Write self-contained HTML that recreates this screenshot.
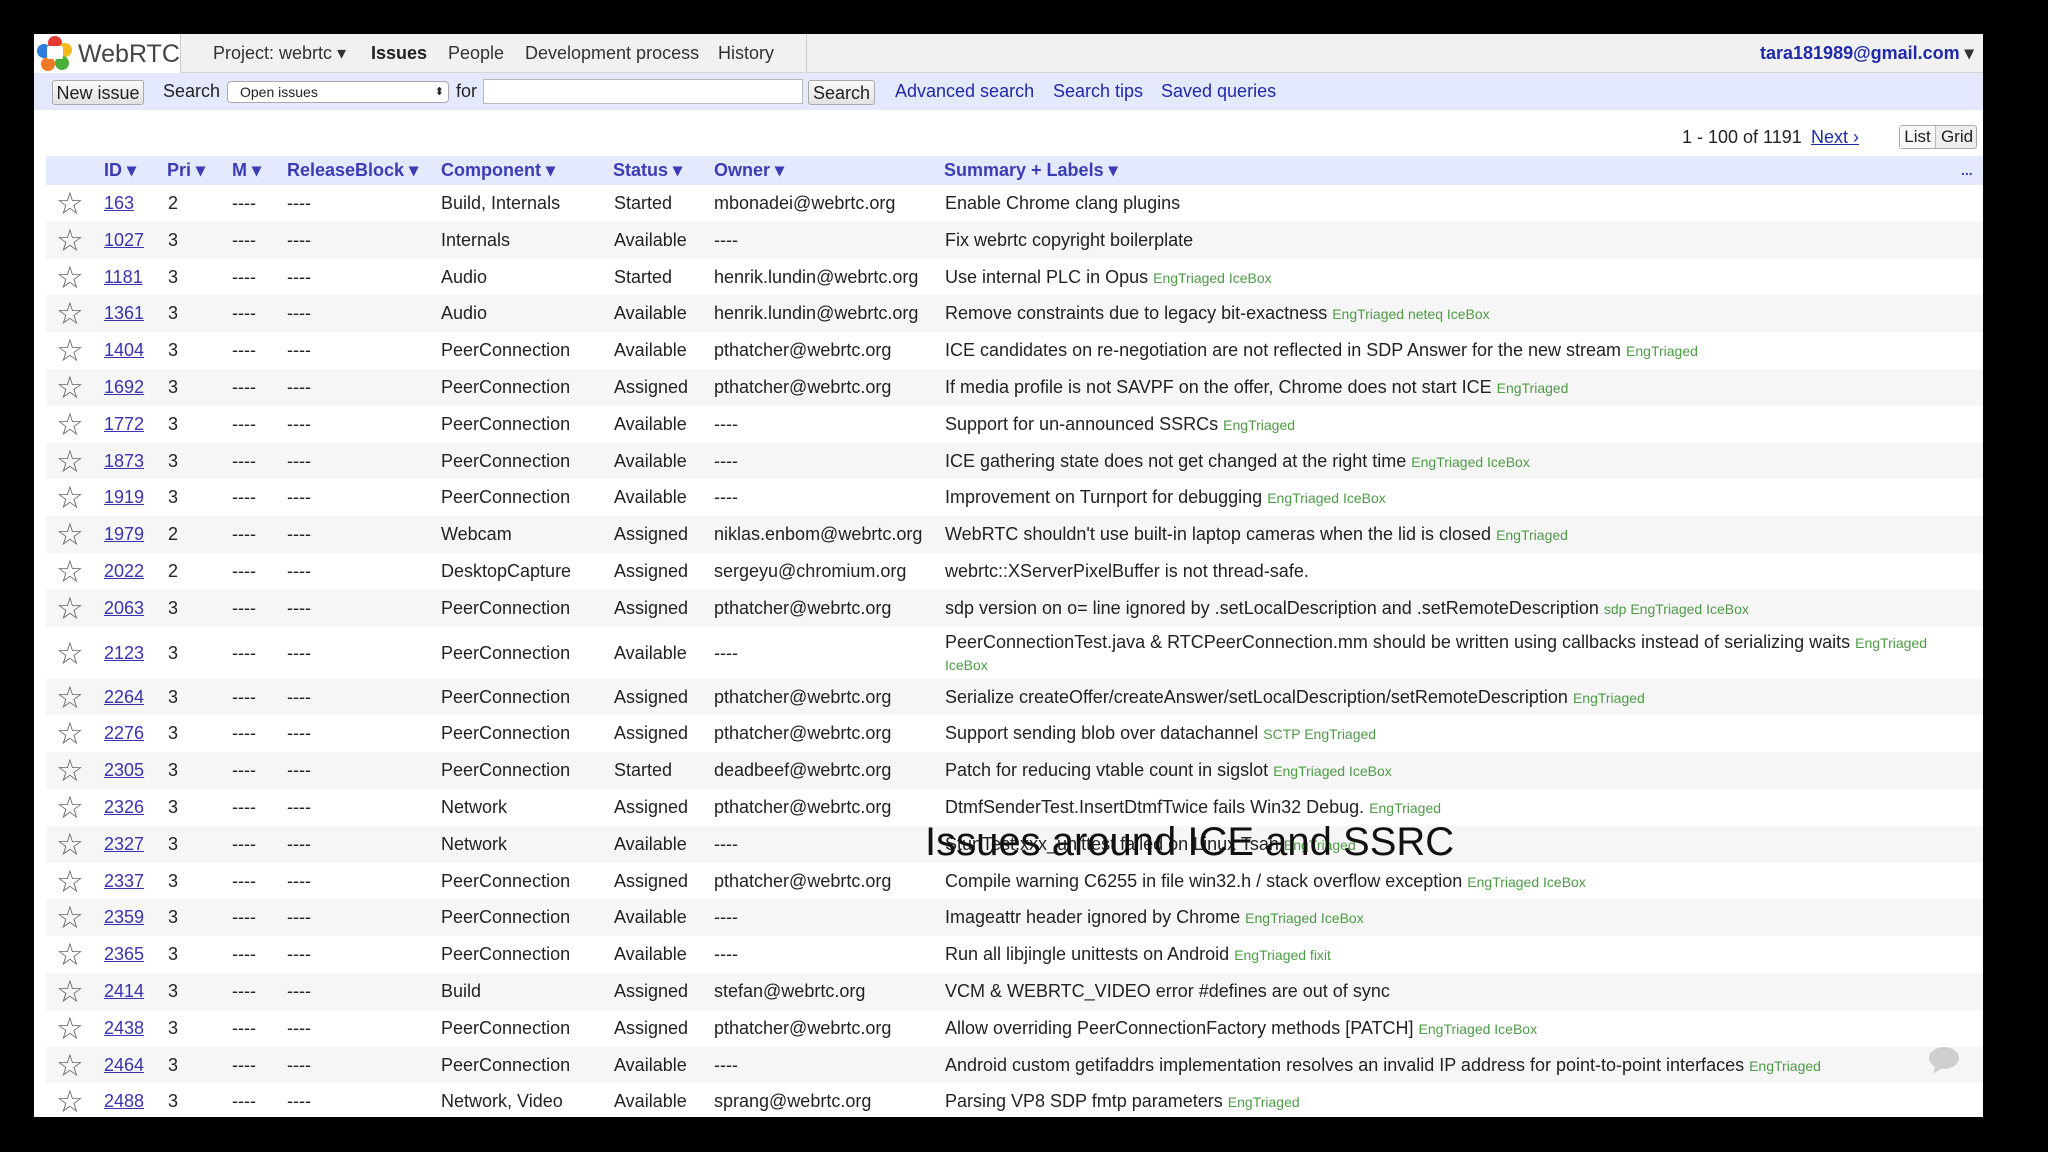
<!DOCTYPE html>
<html><head><meta charset="utf-8">
<style>
*{margin:0;padding:0;box-sizing:border-box}
html,body{width:2048px;height:1152px;background:#000;overflow:hidden}
body{font-family:"Liberation Sans",Arial,sans-serif;color:#222}
#pg{position:absolute;left:34px;top:34px;width:1949px;height:1083px;background:#fff;overflow:hidden}
.a{position:absolute;white-space:nowrap}
#nav{position:absolute;left:0;top:0;width:1949px;height:39px;background:#f1f1f1;border-bottom:1px solid #d6d6d6}
#logo{position:absolute;left:0;top:0;width:147px;height:39px;background:#fff;border-right:1px solid #ccc}
#sb{position:absolute;left:0;top:39px;width:1949px;height:37px;background:#e4e9fd}
.btn{position:absolute;border:1px solid #aaa;border-radius:3px;background:linear-gradient(#fafafa,#e2e2e2);font-size:18px;text-align:center;line-height:24px;color:#222}
.lk{color:#1f2aa8}
#hd{position:absolute;left:12px;top:122px;width:1937px;height:29px;background:#e4e9fd;font-weight:bold;color:#3c3cb4;font-size:18px;line-height:29px}
.r{position:absolute;left:12px;width:1937px;font-size:18px}
.r.o{background:#f6f6f6}
.r > span{position:absolute;white-space:nowrap}
.st{left:10px;font-size:31px;color:#666;top:1px}
.id{left:58px;color:#3a33b0;text-decoration:underline}
.g{color:#4d9b46;font-size:14px}
</style></head><body>
<div id="pg">
 <div id="nav">
  <div id="logo">
   <svg class="a" style="left:2px;top:1px" width="38" height="38" viewBox="0 0 38 38">
    <circle cx="19" cy="8" r="7" fill="#e53a2f"/>
    <circle cx="29" cy="15" r="7" fill="#f6b91b"/>
    <circle cx="26" cy="28" r="7" fill="#4caf3a"/>
    <circle cx="12" cy="29" r="7" fill="#f07a26"/>
    <circle cx="8" cy="16" r="7" fill="#2e7fd8"/>
    <rect x="11" y="11" width="16" height="13" rx="2" fill="#fff"/>
   </svg>
   <div class="a" style="left:44px;top:6px;font-size:25px;color:#444">WebRTC</div>
  </div>
  <div class="a" style="left:179px;top:9px;font-size:18px;color:#333">Project: webrtc ▾</div>
  <div class="a" style="left:337px;top:9px;font-size:18px;font-weight:bold;color:#222">Issues</div>
  <div class="a" style="left:414px;top:9px;font-size:18px;color:#333">People</div>
  <div class="a" style="left:491px;top:9px;font-size:18px;color:#333">Development process</div>
  <div class="a" style="left:684px;top:9px;font-size:18px;color:#333">History</div>
  <div class="a" style="left:772px;top:0;width:1px;height:39px;background:#ccc"></div>
  <div class="a" style="left:1726px;top:9px;font-size:18px;font-weight:bold;color:#1f2aa8">tara181989@gmail.com <span style="color:#333">▾</span></div>
 </div>
 <div id="sb">
  <div class="btn" style="left:18px;top:7px;width:92px;height:25px">New issue</div>
  <div class="a" style="left:129px;top:8px;font-size:18px">Search</div>
  <div class="a" style="left:193px;top:8px;width:222px;height:22px;border:1px solid #aaa;border-radius:4px;background:#fff;font-size:14px;line-height:20px;padding-left:12px">Open issues<span style="position:absolute;right:4px;font-size:11px">⬍</span></div>
  <div class="a" style="left:422px;top:8px;font-size:18px">for</div>
  <div class="a" style="left:449px;top:6px;width:320px;height:25px;border:1px solid #bbb;background:#fff"></div>
  <div class="btn" style="left:774px;top:7px;width:67px;height:25px">Search</div>
  <div class="a lk" style="left:861px;top:8px;font-size:18px">Advanced search</div>
  <div class="a lk" style="left:1019px;top:8px;font-size:18px">Search tips</div>
  <div class="a lk" style="left:1127px;top:8px;font-size:18px">Saved queries</div>
 </div>
 <div class="a" style="left:1648px;top:93px;font-size:18px">1 - 100 of 1191</div>
 <div class="a lk" style="left:1777px;top:93px;font-size:18px;text-decoration:underline">Next ›</div>
 <div class="a" style="left:1865px;top:91px;width:78px;height:24px;border:1px solid #aaa;border-radius:3px;background:#eee;font-size:17px;line-height:22px">
  <span style="position:absolute;left:0;width:36px;text-align:center;background:#f8f8f8;border-right:1px solid #bbb">List</span><span style="position:absolute;left:37px;width:40px;text-align:center">Grid</span></div>
 <div id="hd">
  <span class="a" style="left:58px">ID ▾</span>
  <span class="a" style="left:121px">Pri ▾</span>
  <span class="a" style="left:186px">M ▾</span>
  <span class="a" style="left:241px">ReleaseBlock ▾</span>
  <span class="a" style="left:395px">Component ▾</span>
  <span class="a" style="left:567px">Status ▾</span>
  <span class="a" style="left:668px">Owner ▾</span>
  <span class="a" style="left:898px">Summary + Labels ▾</span>
  <span class="a" style="left:1915px;font-size:14px">...</span>
 </div>
 <div id="rows"></div>
 <div class="a" style="left:891px;top:786px;font-size:40px;color:#111">Issues around ICE and SSRC</div>
 <svg class="a" style="left:1893px;top:1012px" width="34" height="30" viewBox="0 0 34 30"><ellipse cx="17" cy="12" rx="15" ry="11" fill="#cfcfcf"/><path d="M8 20 L6 28 L15 22 Z" fill="#cfcfcf"/></svg>
</div>
<script>
var D=[
["163","2","Build, Internals","Started","mbonadei@webrtc.org","Enable Chrome clang plugins",""],
["1027","3","Internals","Available","----","Fix webrtc copyright boilerplate",""],
["1181","3","Audio","Started","henrik.lundin@webrtc.org","Use internal PLC in Opus","EngTriaged IceBox"],
["1361","3","Audio","Available","henrik.lundin@webrtc.org","Remove constraints due to legacy bit-exactness","EngTriaged neteq IceBox"],
["1404","3","PeerConnection","Available","pthatcher@webrtc.org","ICE candidates on re-negotiation are not reflected in SDP Answer for the new stream","EngTriaged"],
["1692","3","PeerConnection","Assigned","pthatcher@webrtc.org","If media profile is not SAVPF on the offer, Chrome does not start ICE","EngTriaged"],
["1772","3","PeerConnection","Available","----","Support for un-announced SSRCs","EngTriaged"],
["1873","3","PeerConnection","Available","----","ICE gathering state does not get changed at the right time","EngTriaged IceBox"],
["1919","3","PeerConnection","Available","----","Improvement on Turnport for debugging","EngTriaged IceBox"],
["1979","2","Webcam","Assigned","niklas.enbom@webrtc.org","WebRTC shouldn't use built-in laptop cameras when the lid is closed","EngTriaged"],
["2022","2","DesktopCapture","Assigned","sergeyu@chromium.org","webrtc::XServerPixelBuffer is not thread-safe.",""],
["2063","3","PeerConnection","Assigned","pthatcher@webrtc.org","sdp version on o= line ignored by .setLocalDescription and .setRemoteDescription","sdp EngTriaged IceBox"],
["2123","3","PeerConnection","Available","----","PeerConnectionTest.java &amp; RTCPeerConnection.mm should be written using callbacks instead of serializing waits","EngTriaged IceBox"],
["2264","3","PeerConnection","Assigned","pthatcher@webrtc.org","Serialize createOffer/createAnswer/setLocalDescription/setRemoteDescription","EngTriaged"],
["2276","3","PeerConnection","Assigned","pthatcher@webrtc.org","Support sending blob over datachannel","SCTP EngTriaged"],
["2305","3","PeerConnection","Started","deadbeef@webrtc.org","Patch for reducing vtable count in sigslot","EngTriaged IceBox"],
["2326","3","Network","Assigned","pthatcher@webrtc.org","DtmfSenderTest.InsertDtmfTwice fails Win32 Debug.","EngTriaged"],
["2327","3","Network","Available","----","StunTest.xxx_unittest failed on Linux Tsan","EngTriaged"],
["2337","3","PeerConnection","Assigned","pthatcher@webrtc.org","Compile warning C6255 in file win32.h / stack overflow exception","EngTriaged IceBox"],
["2359","3","PeerConnection","Available","----","Imageattr header ignored by Chrome","EngTriaged IceBox"],
["2365","3","PeerConnection","Available","----","Run all libjingle unittests on Android","EngTriaged fixit"],
["2414","3","Build","Assigned","stefan@webrtc.org","VCM &amp; WEBRTC_VIDEO error #defines are out of sync",""],
["2438","3","PeerConnection","Assigned","pthatcher@webrtc.org","Allow overriding PeerConnectionFactory methods [PATCH]","EngTriaged IceBox"],
["2464","3","PeerConnection","Available","----","Android custom getifaddrs implementation resolves an invalid IP address for point-to-point interfaces","EngTriaged"],
["2488","3","Network, Video","Available","sprang@webrtc.org","Parsing VP8 SDP fmtp parameters","EngTriaged"]];
var h="",yy=151;
for(var i=0;i<D.length;i++){var d=D[i],H=(i==12?52:36.8);
 h+='<div class="r'+(i%2?' o':'')+'" style="top:'+yy+'px;height:'+H+'px;line-height:'+H+'px">';
 h+='<span class="st">☆</span><span class="id">'+d[0]+'</span><span style="left:122px">'+d[1]+'</span><span style="left:186px">----</span><span style="left:241px">----</span>';
 h+='<span style="left:395px">'+d[2]+'</span><span style="left:568px">'+d[3]+'</span><span style="left:668px">'+d[4]+'</span>';
 if(i==12){h+='<span style="left:899px;top:5px;line-height:21px;white-space:normal;width:1000px">'+d[5]+' <span class="g">EngTriaged</span><br><span class="g">IceBox</span></span>';}
 else h+='<span style="left:899px">'+d[5]+(d[6]?' <span class="g">'+d[6]+'</span>':'')+'</span>';
 h+='</div>';yy+=H;}
document.getElementById('rows').innerHTML=h;
</script>
</body></html>
